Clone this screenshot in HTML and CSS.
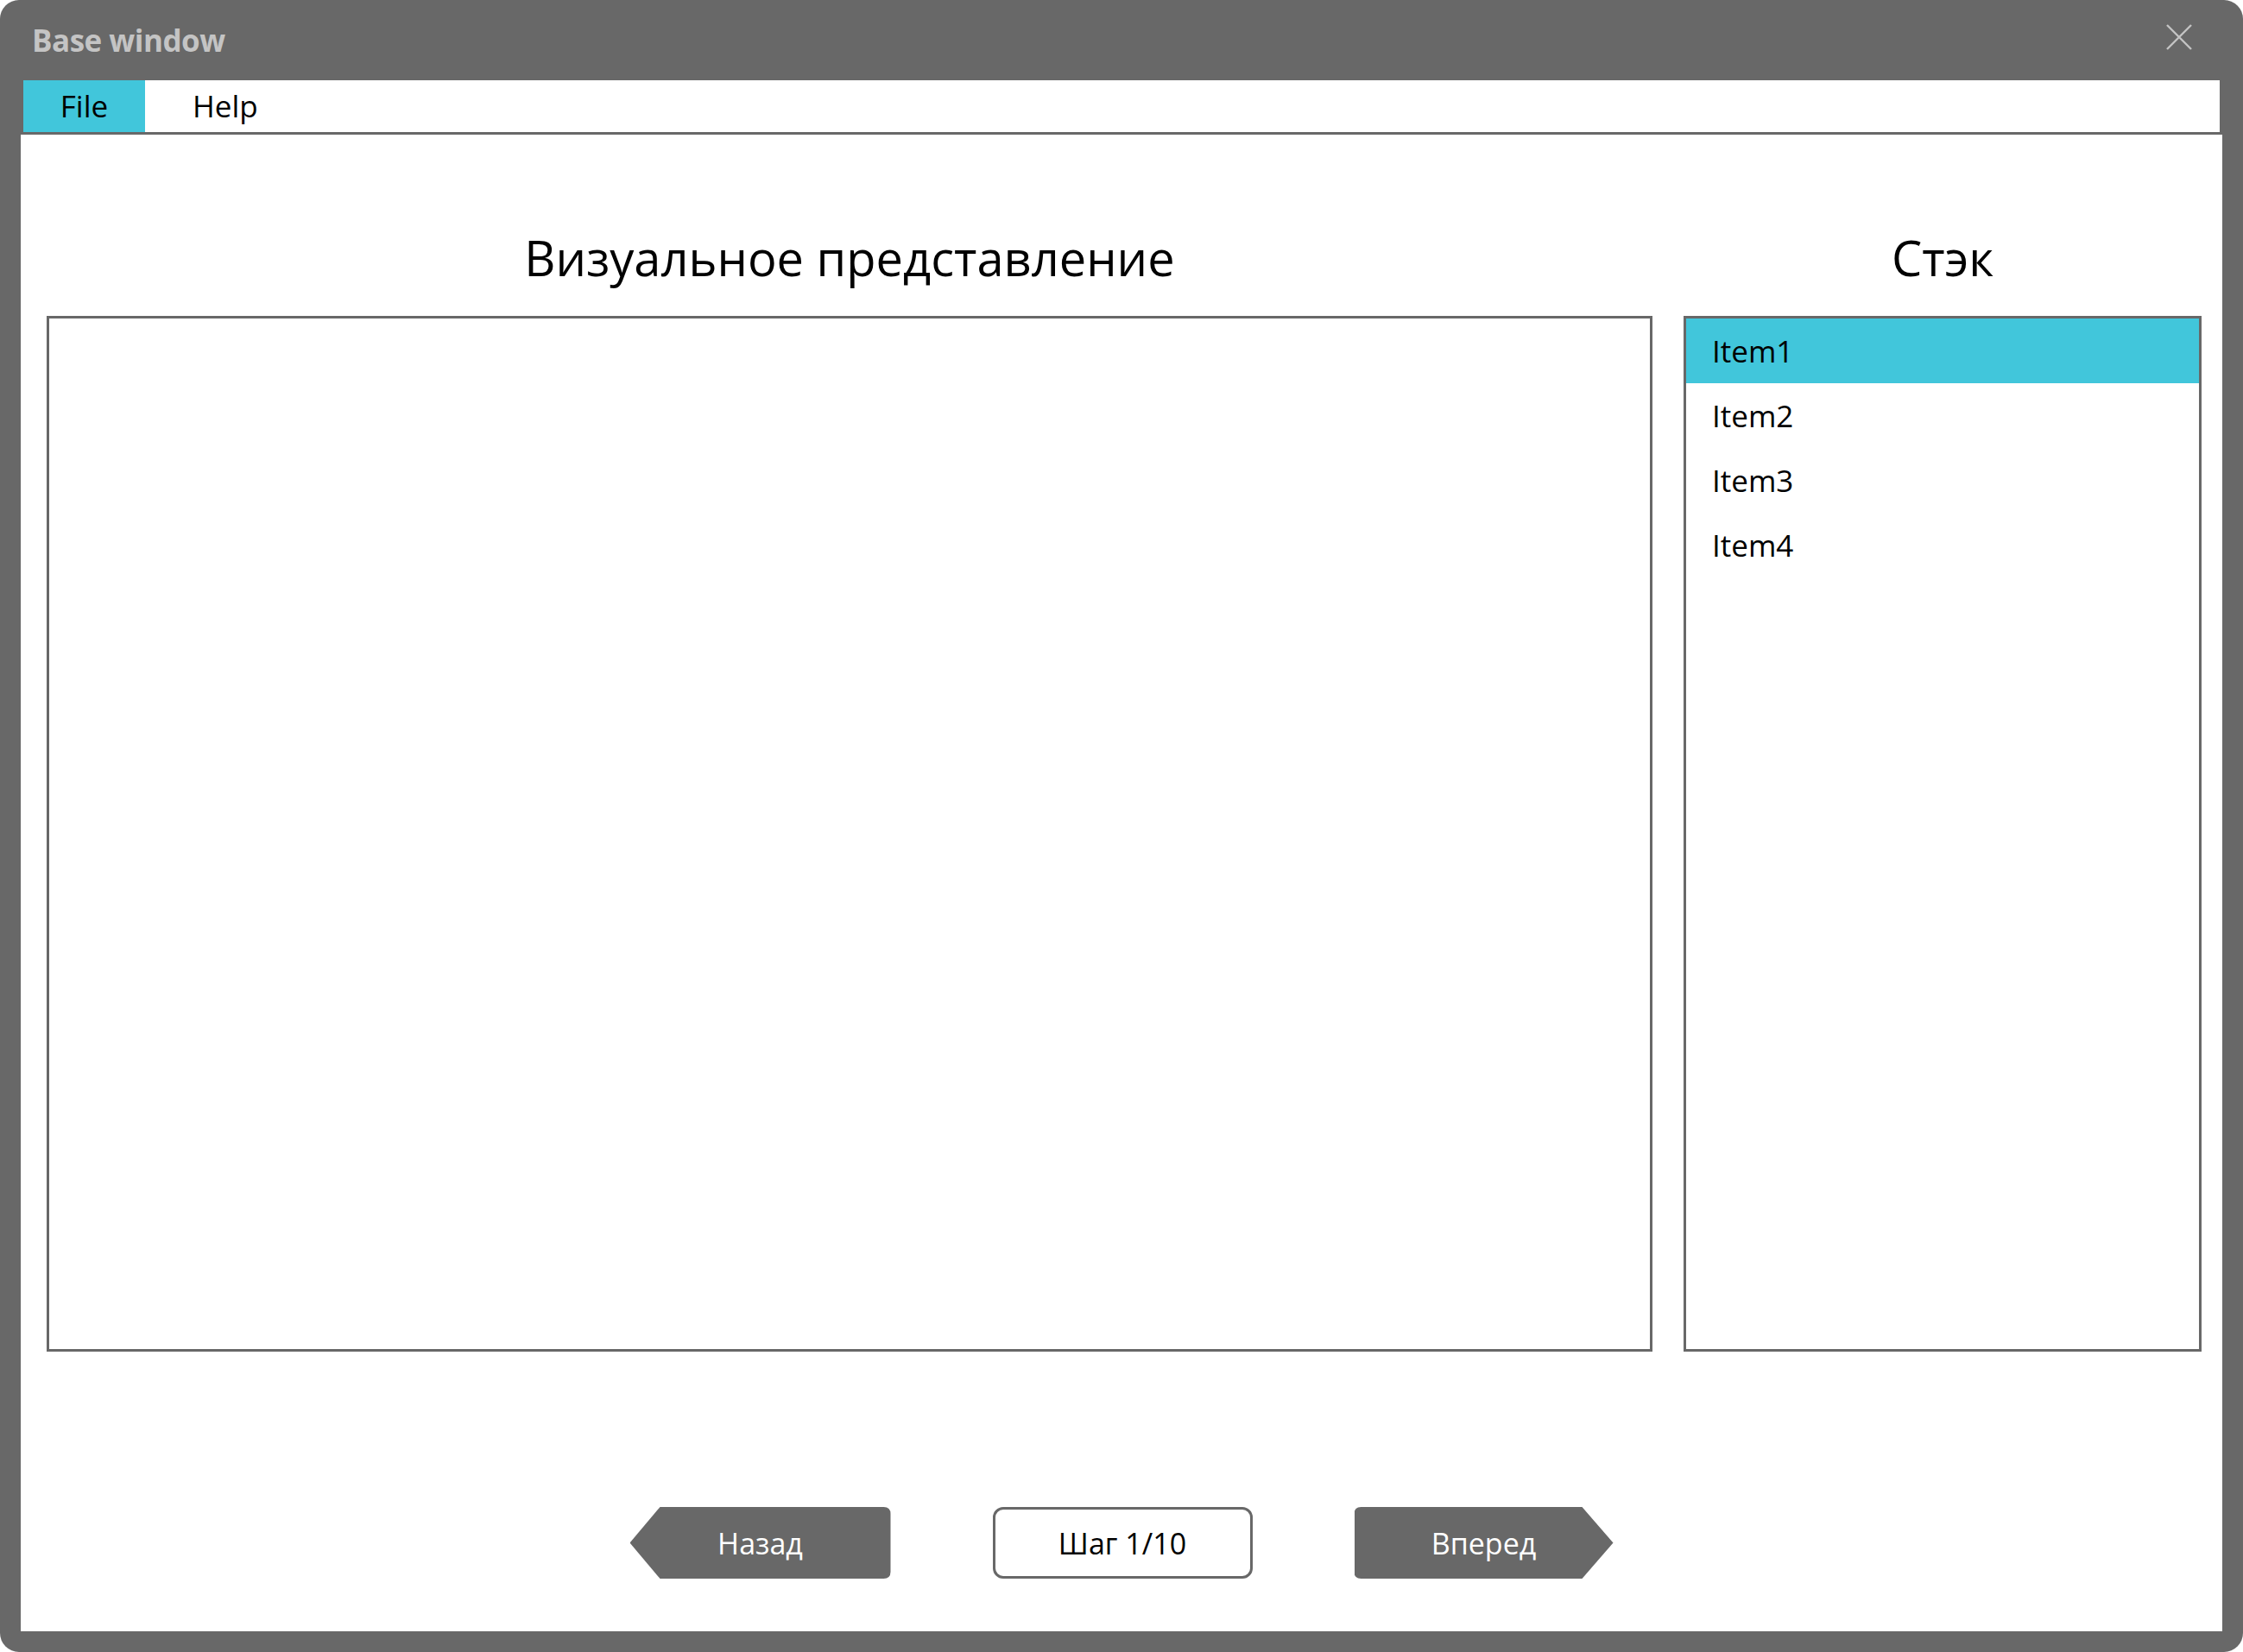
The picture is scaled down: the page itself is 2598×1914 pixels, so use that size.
FILE: index.html
```html
<!DOCTYPE html>
<html lang="ru">
<head>
<meta charset="utf-8">
<title>Base window</title>
<link rel="stylesheet" href="styles.css">
</head>
<body>
<div class="window">
  <div class="titlebar">
    <span class="title">Base window</span>
    <svg class="close" width="30" height="30" viewBox="0 0 30 30"><path d="M1 1 L29 29 M29 1 L1 29" stroke="#c4c4c4" stroke-width="2.4" fill="none"/></svg>
  </div>
  <div class="menubar">
    <span class="menu-item active">File</span>
    <span class="menu-item help">Help</span>
  </div>
  <div class="content">
    <div class="panels">
      <div class="col col-visual">
        <div class="heading">Визуальное представление</div>
        <div class="box canvas"></div>
      </div>
      <div class="col col-stack">
        <div class="heading">Стэк</div>
        <div class="box stack">
          <div class="item selected">Item1</div>
          <div class="item">Item2</div>
          <div class="item">Item3</div>
          <div class="item">Item4</div>
        </div>
      </div>
    </div>
    <div class="buttons">
      <div class="btn btn-back">Назад</div>
      <div class="btn btn-step">Шаг 1/10</div>
      <div class="btn btn-next">Вперед</div>
    </div>
  </div>
</div>
</body>
</html>
```
FILE: styles.css
```css
html, body {
  margin: 0;
  padding: 0;
  background: #ffffff;
}
body {
  font-family: "Open Sans", "Noto Sans", sans-serif;
  color: #000;
}
.window {
  width: 2598px;
  height: 1914px;
  box-sizing: border-box;
  background: #686868;
  border-radius: 22px;
  padding: 0 24px 24px 24px;
  display: flex;
  flex-direction: column;
}
.titlebar {
  height: 93px;
  flex: none;
  display: flex;
  align-items: center;
  justify-content: space-between;
  padding: 0 35px 0 13px;
}
.title {
  font-size: 35px;
  font-weight: 700;
  color: #c4c4c4;
  line-height: 93px;
  letter-spacing: -0.5px;
}
.close {
  display: block;
  margin-top: -8px;
}
.menubar {
  height: 60px;
  flex: none;
  margin: 0 3px;
  background: #fff;
  display: flex;
}
.menu-item {
  font-size: 35px;
  line-height: 60px;
  height: 60px;
}
.menu-item.active {
  background: #41c6db;
  width: 141px;
  text-align: center;
}
.menu-item.help {
  margin-left: 55px;
}
.content {
  flex: 1;
  background: #fff;
  border-top: 3px solid #686868;
  display: flex;
  flex-direction: column;
  padding: 0 0 61px 0;
}
.panels {
  display: flex;
  gap: 36px;
  padding: 0 24px 0 30px;
}
.col {
  display: flex;
  flex-direction: column;
}
.col-visual {
  width: 1860px;
}
.col-stack {
  width: 600px;
}
.heading {
  height: 210px;
  box-sizing: border-box;
  padding-top: 102px;
  font-size: 56px;
  line-height: 80px;
  text-align: center;
}
.box {
  height: 1200px;
  box-sizing: border-box;
  border: 3px solid #686868;
  background: #fff;
}
.item {
  height: 75px;
  line-height: 75px;
  font-size: 35px;
  padding-left: 30px;
}
.item.selected {
  background: #41c6db;
}
.buttons {
  margin-top: 180px;
  display: flex;
  justify-content: center;
  gap: 118px;
}
.btn {
  height: 83px;
  box-sizing: border-box;
  display: flex;
  align-items: center;
  justify-content: center;
  font-size: 34px;
}
.btn-back {
  width: 302px;
  background: #686868;
  color: #fff;
  clip-path: path('M35 0 H294 Q302 0 302 8 V75 Q302 83 294 83 H35 L0 41.5 Z');
}
.btn-step {
  width: 301px;
  border: 3px solid #686868;
  border-radius: 12px;
  color: #000;
}
.btn-next {
  width: 300px;
  background: #686868;
  color: #fff;
  clip-path: path('M8 0 H264 L300 41.5 L264 83 H8 Q0 83 0 75 V8 Q0 0 8 0 Z');
}
```
